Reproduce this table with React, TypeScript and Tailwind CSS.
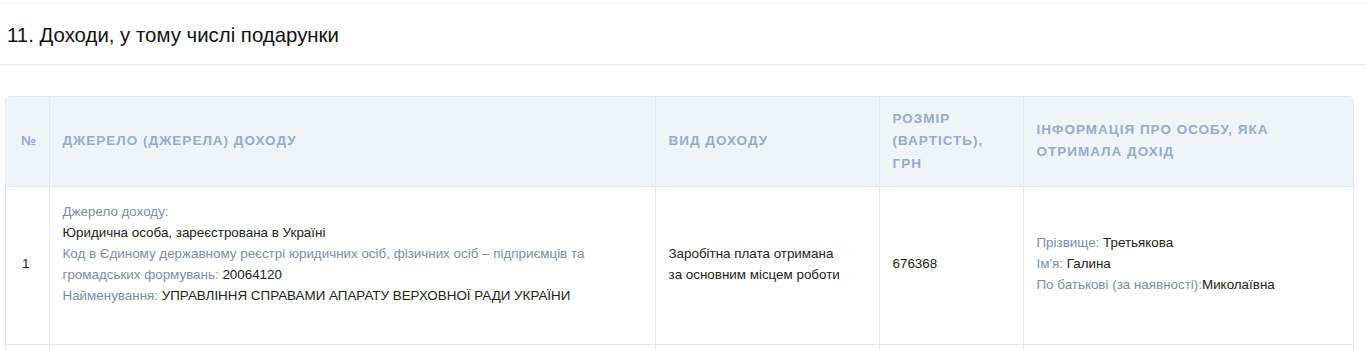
import React from "react";

export default function App() {
  const font = { fontFamily: '"Liberation Sans", Arial, sans-serif' };
  const th =
    "border-l border-[#e3e8ef] px-[13px] text-left align-middle text-[13.5px] font-bold uppercase leading-[22.5px] tracking-[1px] text-[#97abca]";
  const td =
    "border-l border-t border-[#e3e8ef] px-[13px] pb-[3px] align-middle text-[13.4px] leading-[21px] text-[#222]";
  const lbl = "text-[#7a8ca9]";
  return (
    <div style={font} className="w-[1366px] bg-white">
      <div className="h-[4px] border-b border-[#f0f3fa]" />
      <div className="flex h-[61px] items-center border-b border-[#e6e8eb] pl-[7px]">
        <h2 className="pt-[1px] text-[20.4px] font-normal leading-[28px] text-[#111]">
          11. Доходи, у тому числі подарунки
        </h2>
      </div>
      <div className="pl-[5px] pr-[12px] pt-[31px]">
        <div className="overflow-hidden rounded-[5px] border border-[#e3e8ef]">
          <table className="w-full border-collapse" style={{ tableLayout: "fixed" }}>
            <colgroup>
              <col style={{ width: 43 }} />
              <col style={{ width: 606 }} />
              <col style={{ width: 224 }} />
              <col style={{ width: 144 }} />
              <col />
            </colgroup>
            <thead>
              <tr className="h-[89px] bg-[#eff4f9]">
                <th className={th + " border-l-0 pl-[15px]"}>№</th>
                <th className={th}>Джерело (джерела) доходу</th>
                <th className={th}>Вид доходу</th>
                <th className={th}>
                  Розмір
                  <br />
                  (вартість),
                  <br />
                  грн
                </th>
                <th className={th}>
                  Інформація про особу, яка
                  <br />
                  отримала дохід
                </th>
              </tr>
            </thead>
            <tbody>
              <tr className="h-[158px]">
                <td className={td + " border-l-0 pl-[16px]"}>1</td>
                <td className={td + " !pb-[36px] pt-[14px] align-top"}>
                  <div className={lbl}>Джерело доходу:</div>
                  <div>Юридична особа, зареєстрована в Україні</div>
                  <div>
                    <span className={lbl}>
                      Код в Єдиному державному реєстрі юридичних осіб, фізичних осіб – підприємців та
                      <br />
                      громадських формувань:
                    </span>{" "}
                    20064120
                  </div>
                  <div>
                    <span className={lbl}>Найменування:</span> УПРАВЛІННЯ СПРАВАМИ АПАРАТУ ВЕРХОВНОЇ РАДИ УКРАЇНИ
                  </div>
                </td>
                <td className={td}>
                  Заробітна плата отримана
                  <br />
                  за основним місцем роботи
                </td>
                <td className={td}>676368</td>
                <td className={td}>
                  <div>
                    <span className={lbl}>Прізвище:</span> Третьякова
                  </div>
                  <div>
                    <span className={lbl}>Ім'я:</span> Галина
                  </div>
                  <div>
                    <span className={lbl}>По батькові (за наявності):</span>Миколаївна
                  </div>
                </td>
              </tr>
              <tr className="h-[20px]">
                <td className={td + " border-l-0"} />
                <td className={td} />
                <td className={td} />
                <td className={td} />
                <td className={td} />
              </tr>
            </tbody>
          </table>
        </div>
      </div>
    </div>
  );
}
